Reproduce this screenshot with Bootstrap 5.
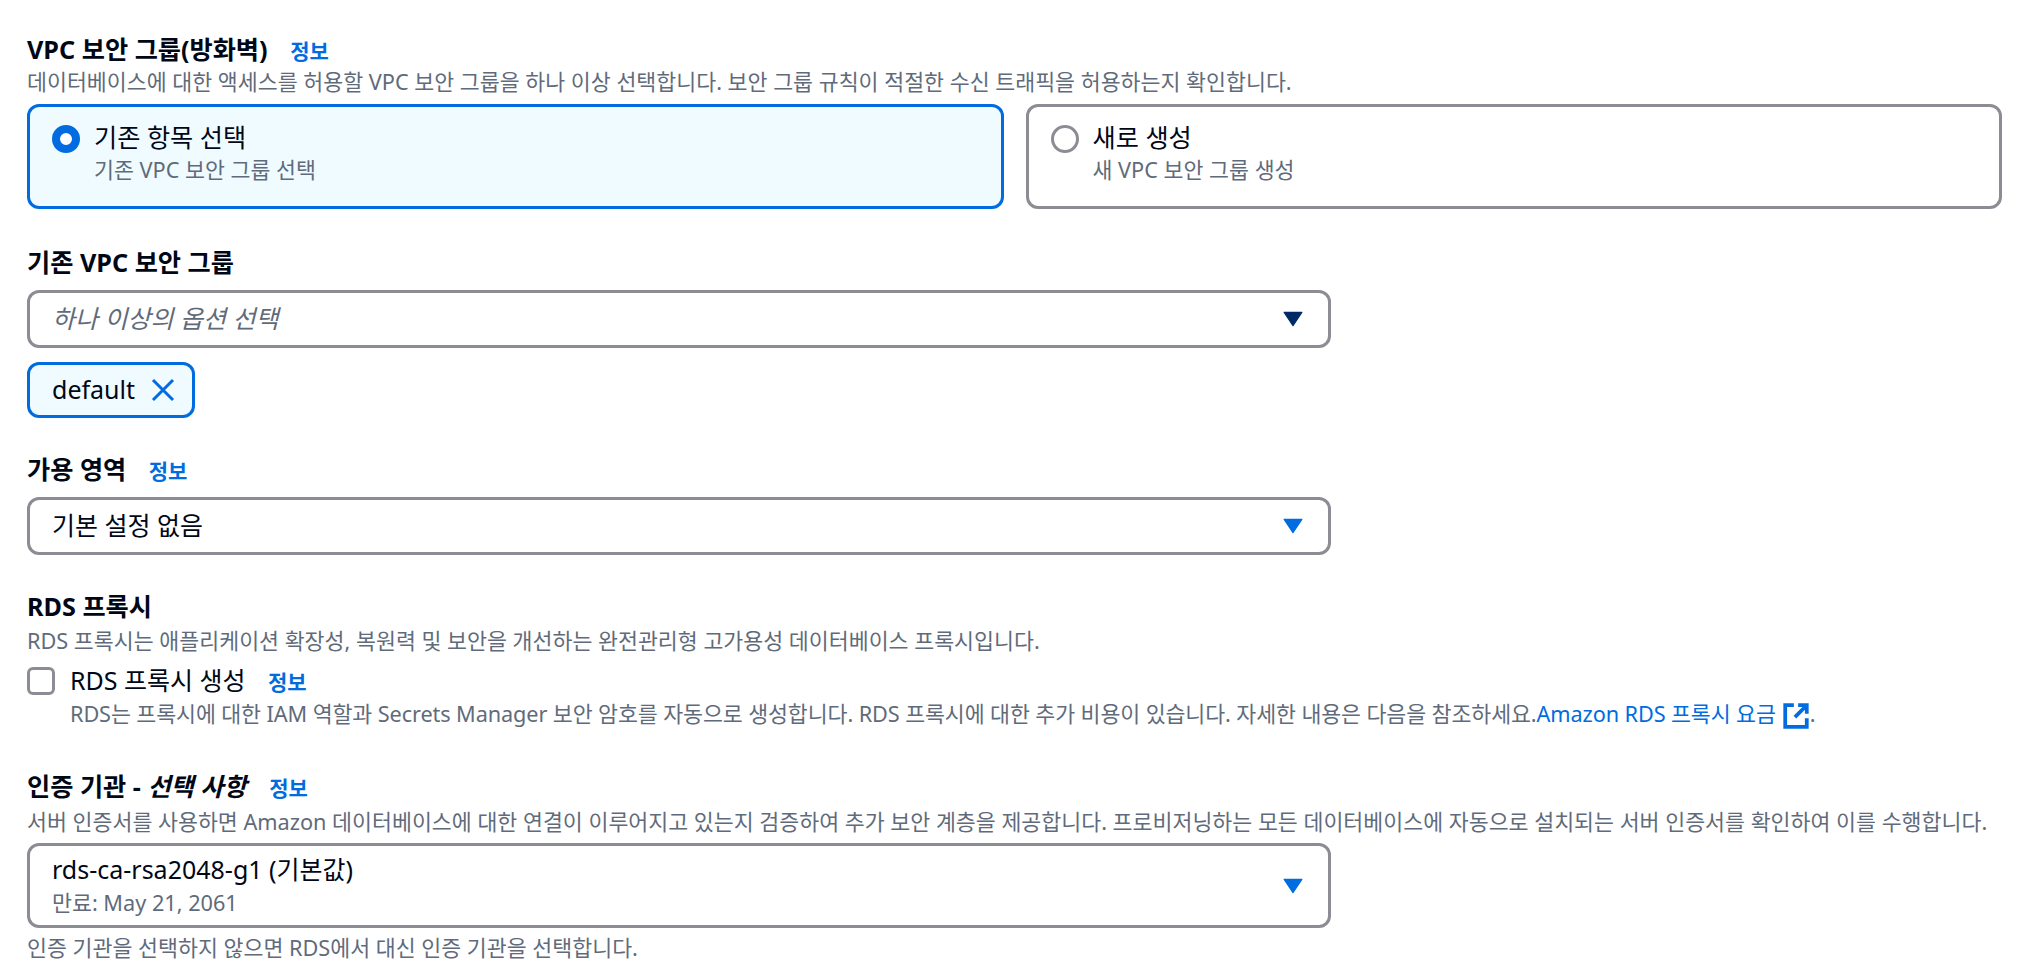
<!DOCTYPE html>
<html lang="ko">
<head>
    <meta charset="UTF-8">
    <meta name="viewport" content="width=device-width, initial-scale=1.0">
    <title>RDS 연결 설정</title>
    <link rel="stylesheet" href="https://cdn.jsdelivr.net/npm/bootstrap@5.3.0/dist/css/bootstrap.min.css">
    <style>
        body { font-family: "Noto Sans", "Noto Sans CJK KR", sans-serif; font-size: 25px; color: #000716; background: #fff; }
        .page-wrap { padding: 36px 23px 0 27px; }
        .field-label { font-size: 25.2px; font-weight: 700; line-height: 26px; height: 26px; color: #000716; white-space: nowrap; }
        .info-link { font-size: 21px; font-weight: 700; color: #006ce0; text-decoration: none; margin-left: 16px; }
        .field-desc { font-size: 21.7px; line-height: 24px; color: #5f6b7a; white-space: nowrap; }
        .field-desc.tight { letter-spacing: -0.1px; }
        .choice-row { gap: 22px; margin-top: 10px; }
        .choice-box { flex: 1 1 0; height: 105px; border: 3px solid #8c8c94; border-radius: 12px; padding: 14px 22px; gap: 14px; background: #fff; }
        .choice-box.picked { border-color: #006ce0; background: #f0fbff; }
        .radio-dot { width: 28px; height: 28px; flex: none; margin-top: 4px; border-radius: 50%; border: 3px solid #8c8c94; background: #fff; }
        .picked .radio-dot { border: 8px solid #006ce0; }
        .choice-title { font-size: 25.2px; line-height: 30px; margin-top: 1px; }
        .choice-sub { font-size: 21.7px; line-height: 24px; color: #5f6b7a; margin-top: 6px; }
        .select-box { width: 1304px; height: 58px; border: 3px solid #8c8c94; border-radius: 12px; padding: 0 22px; background: #fff; }
        .select-box.tall { height: 85px; }
        .tall-text { padding-bottom: 2px; }
        .placeholder-text { font-style: italic; color: #5f6b7a; }
        .caret-icon { width: 20px; height: 16px; flex: none; margin-right: 3px; }
        .token-box { width: 168px; height: 56px; margin-top: 14px; border: 3px solid #006ce0; border-radius: 12px; padding: 0 17px 0 22px; background: #f0fbff; }
        .check-box { width: 28px; height: 28px; flex: none; border: 3px solid #8c8c94; border-radius: 6px; background: #fff; }
        .ext-link { color: #006ce0; text-decoration: none; }
        .ext-icon { width: 28px; height: 28px; vertical-align: -8px; margin-left: 6px; }
    </style>
</head>
<body>
    <div class="page-wrap">
        <div class="field-label">VPC 보안 그룹(방화벽) <a class="info-link" href="#">정보</a></div>
        <div class="field-desc" style="margin-top:8px">데이터베이스에 대한 액세스를 허용할 VPC 보안 그룹을 하나 이상 선택합니다. 보안 그룹 규칙이 적절한 수신 트래픽을 허용하는지 확인합니다.</div>
        <div class="d-flex choice-row">
            <div class="d-flex choice-box picked">
                <span class="radio-dot"></span>
                <div>
                    <div class="choice-title">기존 항목 선택</div>
                    <div class="choice-sub">기존 VPC 보안 그룹 선택</div>
                </div>
            </div>
            <div class="d-flex choice-box">
                <span class="radio-dot"></span>
                <div>
                    <div class="choice-title">새로 생성</div>
                    <div class="choice-sub">새 VPC 보안 그룹 생성</div>
                </div>
            </div>
        </div>

        <div class="field-label" style="margin-top:40px">기존 VPC 보안 그룹</div>
        <div class="d-flex align-items-center justify-content-between select-box" style="margin-top:15px">
            <span class="placeholder-text">하나 이상의 옵션 선택</span>
            <svg class="caret-icon" viewBox="0 0 18 14"><path d="M1 1h16L9 13z" fill="#002a66" stroke="#002a66" stroke-linejoin="round"/></svg>
        </div>
        <div class="d-flex align-items-center justify-content-between token-box">
            <span>default</span>
            <svg width="24" height="24" viewBox="0 0 24 24"><path d="M2 2l20 20M22 2L2 22" fill="none" stroke="#006ce0" stroke-width="3"/></svg>
        </div>

        <div class="field-label" style="margin-top:38px">가용 영역 <a class="info-link" href="#">정보</a></div>
        <div class="d-flex align-items-center justify-content-between select-box" style="margin-top:15px">
            <span>기본 설정 없음</span>
            <svg class="caret-icon" viewBox="0 0 18 14"><path d="M1 1h16L9 13z" fill="#006ce0" stroke="#006ce0" stroke-linejoin="round"/></svg>
        </div>

        <div class="field-label" style="margin-top:38px">RDS 프록시</div>
        <div class="field-desc" style="margin-top:10px">RDS 프록시는 애플리케이션 확장성, 복원력 및 보안을 개선하는 완전관리형 고가용성 데이터베이스 프록시입니다.</div>
        <div class="d-flex" style="gap:15px;margin-top:14px">
            <span class="check-box"></span>
            <div>
                <div style="line-height:26px">RDS 프록시 생성 <a class="info-link" href="#">정보</a></div>
                <div class="field-desc tight" style="margin-top:7px">RDS는 프록시에 대한 IAM 역할과 Secrets Manager 보안 암호를 자동으로 생성합니다. RDS 프록시에 대한 추가 비용이 있습니다. 자세한 내용은 다음을 참조하세요.<a class="ext-link" href="#">Amazon RDS 프록시 요금<svg class="ext-icon" viewBox="0 0 26 26"><path d="M11 3H3v20h20v-8M15 3h8v8M23 3L12 14" fill="none" stroke="#006ce0" stroke-width="3.5"/></svg></a>.</div>
            </div>
        </div>

        <div class="field-label" style="margin-top:43px">인증 기관 - <em>선택 사항</em> <a class="info-link" href="#">정보</a></div>
        <div class="field-desc" style="margin-top:11px">서버 인증서를 사용하면 Amazon 데이터베이스에 대한 연결이 이루어지고 있는지 검증하여 추가 보안 계층을 제공합니다. 프로비저닝하는 모든 데이터베이스에 자동으로 설치되는 서버 인증서를 확인하여 이를 수행합니다.</div>
        <div class="d-flex align-items-center justify-content-between select-box tall" style="margin-top:9px">
            <div class="tall-text">
                <div style="line-height:30px">rds-ca-rsa2048-g1 (기본값)</div>
                <div class="field-desc" style="margin-top:7px">만료: May 21, 2061</div>
            </div>
            <svg class="caret-icon" viewBox="0 0 18 14"><path d="M1 1h16L9 13z" fill="#006ce0" stroke="#006ce0" stroke-linejoin="round"/></svg>
        </div>
        <div class="field-desc" style="margin-top:8px">인증 기관을 선택하지 않으면 RDS에서 대신 인증 기관을 선택합니다.</div>
    </div>
    <script src="https://cdn.jsdelivr.net/npm/bootstrap@5.3.0/dist/js/bootstrap.bundle.min.js"></script>
</body>
</html>
